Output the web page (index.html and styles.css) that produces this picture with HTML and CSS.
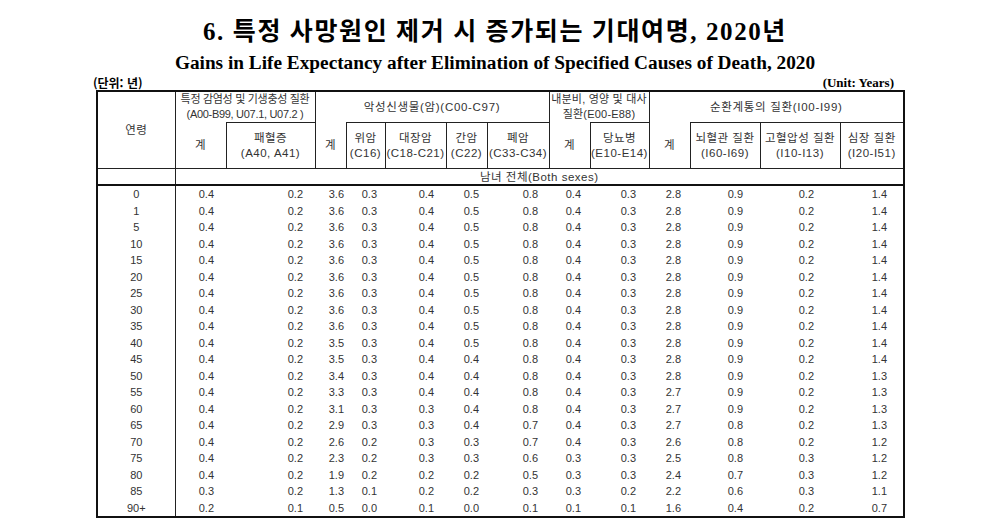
FILE: index.html
```html
<!DOCTYPE html>
<html lang="ko">
<head>
<meta charset="utf-8">
<title>특정 사망원인 제거 시 증가되는 기대여명, 2020년</title>
<link rel="stylesheet" href="styles.css">
</head>
<body>
<main class="sheet">
  <h1 class="title">6. 특정 사망원인 제거 시 증가되는 기대여명, 2020년</h1>
  <p class="subtitle">Gains in Life Expectancy after Elimination of Specified Causes of Death, 2020</p>
  <div class="units"><span class="unit-ko">(단위: 년)</span><span class="unit-en">(Unit: Years)</span></div>
  <table class="stats">
    <colgroup>
      <col class="c-age"><col class="c-inf"><col class="c-sep"><col class="c-can"><col class="c-sto"><col class="c-col"><col class="c-liv"><col class="c-lun"><col class="c-end"><col class="c-dia"><col class="c-cir"><col class="c-cer"><col class="c-hyp"><col class="c-hea">
    </colgroup>
    <thead>
      <tr class="h1">
        <th rowspan="2" class="age-h">연령</th>
        <th colspan="2" class="grp grp-tight">특정 감염성 및 기생충성 질환<br>(A00-B99, U07.1, U07.2 )</th>
        <th colspan="5" class="grp grp-wide">악성신생물(암)(C00-C97)</th>
        <th colspan="2" class="grp grp-end">내분비, 영양 및 대사<br>질환(E00-E88)</th>
        <th colspan="4" class="grp grp-wide">순환계통의 질환(I00-I99)</th>
      </tr>
      <tr class="h2">
        <th class="tot">계</th>
        <th class="sub">패혈증<br>(A40, A41)</th>
        <th class="tot">계</th>
        <th class="sub">위암<br>(C16)</th>
        <th class="sub">대장암<br>(C18-C21)</th>
        <th class="sub">간암<br>(C22)</th>
        <th class="sub">폐암<br>(C33-C34)</th>
        <th class="tot">계</th>
        <th class="sub">당뇨병<br>(E10-E14)</th>
        <th class="tot">계</th>
        <th class="sub">뇌혈관 질환<br>(I60-I69)</th>
        <th class="sub">고혈압성 질환<br>(I10-I13)</th>
        <th class="sub">심장 질환<br>(I20-I51)</th>
      </tr>
      <tr class="h3">
        <th class="age-h"></th>
        <th colspan="13" class="sex">남녀 전체(Both sexes)</th>
      </tr>
    </thead>
    <tbody>
      <tr><td>0</td><td>0.4</td><td>0.2</td><td>3.6</td><td>0.3</td><td>0.4</td><td>0.5</td><td>0.8</td><td>0.4</td><td>0.3</td><td>2.8</td><td>0.9</td><td>0.2</td><td>1.4</td></tr>
      <tr><td>1</td><td>0.4</td><td>0.2</td><td>3.6</td><td>0.3</td><td>0.4</td><td>0.5</td><td>0.8</td><td>0.4</td><td>0.3</td><td>2.8</td><td>0.9</td><td>0.2</td><td>1.4</td></tr>
      <tr><td>5</td><td>0.4</td><td>0.2</td><td>3.6</td><td>0.3</td><td>0.4</td><td>0.5</td><td>0.8</td><td>0.4</td><td>0.3</td><td>2.8</td><td>0.9</td><td>0.2</td><td>1.4</td></tr>
      <tr><td>10</td><td>0.4</td><td>0.2</td><td>3.6</td><td>0.3</td><td>0.4</td><td>0.5</td><td>0.8</td><td>0.4</td><td>0.3</td><td>2.8</td><td>0.9</td><td>0.2</td><td>1.4</td></tr>
      <tr><td>15</td><td>0.4</td><td>0.2</td><td>3.6</td><td>0.3</td><td>0.4</td><td>0.5</td><td>0.8</td><td>0.4</td><td>0.3</td><td>2.8</td><td>0.9</td><td>0.2</td><td>1.4</td></tr>
      <tr><td>20</td><td>0.4</td><td>0.2</td><td>3.6</td><td>0.3</td><td>0.4</td><td>0.5</td><td>0.8</td><td>0.4</td><td>0.3</td><td>2.8</td><td>0.9</td><td>0.2</td><td>1.4</td></tr>
      <tr><td>25</td><td>0.4</td><td>0.2</td><td>3.6</td><td>0.3</td><td>0.4</td><td>0.5</td><td>0.8</td><td>0.4</td><td>0.3</td><td>2.8</td><td>0.9</td><td>0.2</td><td>1.4</td></tr>
      <tr><td>30</td><td>0.4</td><td>0.2</td><td>3.6</td><td>0.3</td><td>0.4</td><td>0.5</td><td>0.8</td><td>0.4</td><td>0.3</td><td>2.8</td><td>0.9</td><td>0.2</td><td>1.4</td></tr>
      <tr><td>35</td><td>0.4</td><td>0.2</td><td>3.6</td><td>0.3</td><td>0.4</td><td>0.5</td><td>0.8</td><td>0.4</td><td>0.3</td><td>2.8</td><td>0.9</td><td>0.2</td><td>1.4</td></tr>
      <tr><td>40</td><td>0.4</td><td>0.2</td><td>3.5</td><td>0.3</td><td>0.4</td><td>0.5</td><td>0.8</td><td>0.4</td><td>0.3</td><td>2.8</td><td>0.9</td><td>0.2</td><td>1.4</td></tr>
      <tr><td>45</td><td>0.4</td><td>0.2</td><td>3.5</td><td>0.3</td><td>0.4</td><td>0.4</td><td>0.8</td><td>0.4</td><td>0.3</td><td>2.8</td><td>0.9</td><td>0.2</td><td>1.4</td></tr>
      <tr><td>50</td><td>0.4</td><td>0.2</td><td>3.4</td><td>0.3</td><td>0.4</td><td>0.4</td><td>0.8</td><td>0.4</td><td>0.3</td><td>2.8</td><td>0.9</td><td>0.2</td><td>1.3</td></tr>
      <tr><td>55</td><td>0.4</td><td>0.2</td><td>3.3</td><td>0.3</td><td>0.4</td><td>0.4</td><td>0.8</td><td>0.4</td><td>0.3</td><td>2.7</td><td>0.9</td><td>0.2</td><td>1.3</td></tr>
      <tr><td>60</td><td>0.4</td><td>0.2</td><td>3.1</td><td>0.3</td><td>0.3</td><td>0.4</td><td>0.8</td><td>0.4</td><td>0.3</td><td>2.7</td><td>0.9</td><td>0.2</td><td>1.3</td></tr>
      <tr><td>65</td><td>0.4</td><td>0.2</td><td>2.9</td><td>0.3</td><td>0.3</td><td>0.4</td><td>0.7</td><td>0.4</td><td>0.3</td><td>2.7</td><td>0.8</td><td>0.2</td><td>1.3</td></tr>
      <tr><td>70</td><td>0.4</td><td>0.2</td><td>2.6</td><td>0.2</td><td>0.3</td><td>0.3</td><td>0.7</td><td>0.4</td><td>0.3</td><td>2.6</td><td>0.8</td><td>0.2</td><td>1.2</td></tr>
      <tr><td>75</td><td>0.4</td><td>0.2</td><td>2.3</td><td>0.2</td><td>0.3</td><td>0.3</td><td>0.6</td><td>0.3</td><td>0.3</td><td>2.5</td><td>0.8</td><td>0.3</td><td>1.2</td></tr>
      <tr><td>80</td><td>0.4</td><td>0.2</td><td>1.9</td><td>0.2</td><td>0.2</td><td>0.2</td><td>0.5</td><td>0.3</td><td>0.3</td><td>2.4</td><td>0.7</td><td>0.3</td><td>1.2</td></tr>
      <tr><td>85</td><td>0.3</td><td>0.2</td><td>1.3</td><td>0.1</td><td>0.2</td><td>0.2</td><td>0.3</td><td>0.3</td><td>0.2</td><td>2.2</td><td>0.6</td><td>0.3</td><td>1.1</td></tr>
      <tr><td>90+</td><td>0.2</td><td>0.1</td><td>0.5</td><td>0.0</td><td>0.1</td><td>0.0</td><td>0.1</td><td>0.1</td><td>0.1</td><td>1.6</td><td>0.4</td><td>0.2</td><td>0.7</td></tr>
    </tbody>
  </table>
</main>
</body>
</html>
```
FILE: styles.css
```css
html, body {
  margin: 0;
  padding: 0;
  background: #ffffff;
}

.sheet {
  width: 990px;
  height: 520px;
  overflow: hidden;
  padding-top: 17px;
  box-sizing: border-box;
}

.title {
  margin: 0;
  font-family: "Liberation Serif", "Noto Sans CJK KR", serif;
  font-weight: 700;
  font-size: 25px;
  line-height: 30px;
  letter-spacing: 1.6px;
  text-align: center;
  color: #000;
}

.subtitle {
  margin: 5px 0 0 0;
  font-family: "Liberation Serif", serif;
  font-weight: 700;
  font-size: 19.3px;
  line-height: 22px;
  text-align: center;
  color: #000;
}

.units {
  display: flex;
  justify-content: space-between;
  align-items: flex-end;
  width: 801px;
  margin: 2px 0 0 93px;
  font-weight: 700;
  line-height: 14px;
  color: #000;
}

.unit-ko {
  font-family: "Noto Sans CJK KR", sans-serif;
  font-size: 12px;
}

.unit-en {
  font-family: "Liberation Serif", serif;
  font-size: 13px;
}

.stats {
  border-collapse: collapse;
  table-layout: fixed;
  width: 808px;
  margin-left: 96px;
  font-family: "Liberation Sans", "Noto Sans CJK KR", sans-serif;
  font-size: 11px;
  color: #333;
  border-top: 2px solid #111;
  border-left: 2px solid #111;
  border-right: 2px solid #111;
}

.c-age { width: 78px; }
.c-inf { width: 51px; }
.c-sep { width: 89px; }
.c-can { width: 31px; }
.c-sto { width: 39px; }
.c-col { width: 61px; }
.c-liv { width: 41px; }
.c-lun { width: 62px; }
.c-end { width: 41px; }
.c-dia { width: 59px; }
.c-cir { width: 41px; }
.c-cer { width: 70px; }
.c-hyp { width: 80px; }
.c-hea { width: 64px; }

.stats th {
  padding: 0;
  font-weight: 400;
  font-size: 11.5px;
  letter-spacing: 0.5px;
  text-align: center;
  vertical-align: middle;
  line-height: 15px;
  border: 1px solid #222;
  white-space: nowrap;
  overflow: hidden;
}

.stats .h1 th { height: 30px; }
.stats .h2 th { height: 45px; }
.stats .h3 th { height: 15px; line-height: 14px; }

.stats .h1 .grp { border-bottom: none; }
.stats .h2 .tot { border-top: none; }

.stats .h1 .grp-tight {
  font-size: 11px;
  letter-spacing: -0.3px;
}
.stats .h1 .grp-end {
  font-size: 11px;
  letter-spacing: 0.2px;
}
.stats .h1 .grp-wide {
  letter-spacing: 0.7px;
}

.stats .h3 th {
  border-bottom: 2px solid #111;
}

.stats .h3 .sex {
  border-left: 1px solid #222;
}

.stats td {
  padding: 0;
  height: 16.5px;
  line-height: 16px;
  text-align: right;
  white-space: nowrap;
  border: none;
}

.stats tbody tr:last-child td {
  border-bottom: 2px solid #111;
}

.stats td:nth-child(1) {
  text-align: center;
  border-right: 1px solid #222;
}
.stats td:nth-child(2)  { padding-right: 12px; }
.stats td:nth-child(3)  { padding-right: 12px; }
.stats td:nth-child(4)  { padding-right: 2px; }
.stats td:nth-child(5)  { padding-right: 8px; }
.stats td:nth-child(6)  { padding-right: 12px; }
.stats td:nth-child(7)  { padding-right: 8px; }
.stats td:nth-child(8)  { padding-right: 11px; }
.stats td:nth-child(9)  { padding-right: 9px; }
.stats td:nth-child(10) { padding-right: 13px; }
.stats td:nth-child(11) { padding-right: 9px; }
.stats td:nth-child(12) { padding-right: 17px; }
.stats td:nth-child(13) { padding-right: 26px; }
.stats td:nth-child(14) { padding-right: 16px; }
```
